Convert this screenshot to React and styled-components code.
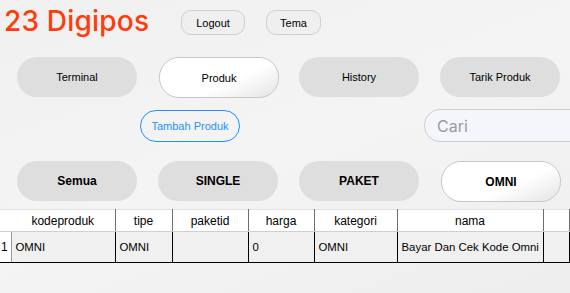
import React from "react";
import styled, { createGlobalStyle } from "styled-components";

const GlobalStyle = createGlobalStyle`
  html, body {
    margin: 0;
    padding: 0;
    background: #f0f0f0;
  }
  * {
    box-sizing: border-box;
  }
`;

const Page = styled.div`
  width: 570px;
  height: 293px;
  overflow: hidden;
  background: linear-gradient(160deg, #f0f0f0 0%, #f4f4f4 50%, #eeeeee 100%);
  font-family: "Liberation Sans", Arial, sans-serif;
`;

const TopBar = styled.div`
  display: flex;
  align-items: center;
  height: 45px;
  padding: 0 0 0 4px;
`;

const Title = styled.h1`
  margin: 0 30px 0 0;
  width: 147px;
  flex-shrink: 0;
  font-family: Inter, "Open Sans", sans-serif;
  font-weight: 500;
  font-size: 28px;
  letter-spacing: 0.2px;
  color: #ff3c0a;
  line-height: 1;
  position: relative;
  top: -2px;
`;

const SmallButton = styled.button`
  height: 25px;
  width: ${(p) => p.w}px;
  margin-right: ${(p) => p.mr || 0}px;
  border: 1px solid #cfcfcf;
  border-radius: 10px;
  background: #efefef;
  font-family: "Liberation Sans", Arial, sans-serif;
  font-size: 11px;
  color: #000;
  padding: 0;
`;

const ButtonRow = styled.div`
  display: grid;
  grid-template-columns: repeat(4, 120px);
  column-gap: 21px;
  padding-left: 17px;
  margin-top: ${(p) => p.mt}px;
`;

const PillButton = styled.button`
  height: ${(p) => (p.active ? 41 : 40)}px;
  width: 120px;
  border-radius: 20px;
  padding: 0;
  border: ${(p) => (p.active ? "1px solid #c8c8c8" : "none")};
  background: ${(p) =>
    p.active
      ? "linear-gradient(155deg, #ffffff 0%, #ffffff 60%, #e4e4e4 100%)"
      : "#dedede"};
  font-family: "Liberation Sans", Arial, sans-serif;
  font-size: ${(p) => (p.bold ? 12 : 11)}px;
  font-weight: ${(p) => (p.bold ? 700 : 400)};
  color: #000;
  margin-left: ${(p) => (p.active ? 1 : 0)}px;
`;

const ActionRow = styled.div`
  display: flex;
  align-items: center;
  margin-top: 11px;
  height: 33px;
`;

const OutlineButton = styled.button`
  flex-shrink: 0;
  margin-left: 140px;
  width: 100px;
  height: 32px;
  border: 1px solid #1e90ff;
  border-radius: 16px;
  background: transparent;
  color: #1e90ff;
  font-family: "Liberation Sans", Arial, sans-serif;
  font-size: 11px;
  white-space: nowrap;
  padding: 0;
`;

const SearchInput = styled.input`
  flex-shrink: 0;
  margin-left: 184px;
  width: 170px;
  height: 33px;
  border: 1px solid #cdcdcd;
  border-radius: 16px;
  background: #f5f6fb;
  padding: 0 0 0 12px;
  font-family: Inter, "Open Sans", sans-serif;
  font-size: 16px;
  color: #333;
  outline: none;
  &::placeholder {
    color: #9a9a9a;
  }
`;

const TableWrap = styled.div`
  margin-top: 7px;
`;

const Table = styled.table`
  border-collapse: collapse;
  table-layout: fixed;
  width: 570px;
  font-family: "Liberation Sans", Arial, sans-serif;
  font-size: 12px;
`;

const Th = styled.th`
  height: 22px;
  background: #ffffff;
  font-weight: 400;
  text-align: center;
  color: #000;
  padding: 0;
  border-top: 1px solid #e2e2e2;
  border-right: 1px solid #6e6e6e;
  border-bottom: 1px solid #cfcfcf;
  &:first-child {
    border-right: none;
  }
`;

const Td = styled.td`
  height: 31px;
  padding: 0 0 0 4px;
  background: #f0f0f0;
  color: #000;
  font-size: 11.4px;
  white-space: nowrap;
  overflow: hidden;
  border-right: 1px solid #000;
  border-bottom: 1px solid #000;
  &:nth-child(2) {
    border-left: 1px solid #9a9a9a;
    border-top: 1px solid #9a9a9a;
  }
`;

const RowHead = styled.td`
  height: 31px;
  padding: 0 0 0 1px;
  background: #ffffff;
  color: #000;
  border-bottom: 1px solid #000;
`;

const columns = [
  { key: "kodeproduk", w: 104 },
  { key: "tipe", w: 57 },
  { key: "paketid", w: 76 },
  { key: "harga", w: 66 },
  { key: "kategori", w: 83 },
  { key: "nama", w: 146 },
];

const rows = [
  {
    kodeproduk: "OMNI",
    tipe: "OMNI",
    paketid: "",
    harga: "0",
    kategori: "OMNI",
    nama: "Bayar Dan Cek Kode Omni",
  },
];

export default function App() {
  return (
    <Page>
      <GlobalStyle />
      <TopBar>
        <Title>23 Digipos</Title>
        <SmallButton w={64} mr={21}>Logout</SmallButton>
        <SmallButton w={55}>Tema</SmallButton>
      </TopBar>

      <ButtonRow mt={12}>
        <PillButton>Terminal</PillButton>
        <PillButton active>Produk</PillButton>
        <PillButton>History</PillButton>
        <PillButton>Tarik Produk</PillButton>
      </ButtonRow>

      <ActionRow>
        <OutlineButton>Tambah Produk</OutlineButton>
        <SearchInput placeholder="Cari" />
      </ActionRow>

      <ButtonRow mt={19}>
        <PillButton bold>Semua</PillButton>
        <PillButton bold>SINGLE</PillButton>
        <PillButton bold>PAKET</PillButton>
        <PillButton bold active>OMNI</PillButton>
      </ButtonRow>

      <TableWrap>
        <Table>
          <colgroup>
            <col style={{ width: 11 }} />
            {columns.map((c) => (
              <col key={c.key} style={{ width: c.w }} />
            ))}
            <col />
          </colgroup>
          <thead>
            <tr>
              <Th />
              {columns.map((c) => (
                <Th key={c.key}>{c.key}</Th>
              ))}
              <Th />
            </tr>
          </thead>
          <tbody>
            {rows.map((r, i) => (
              <tr key={i}>
                <RowHead>{i + 1}</RowHead>
                {columns.map((c) => (
                  <Td key={c.key}>{r[c.key]}</Td>
                ))}
                <Td />
              </tr>
            ))}
          </tbody>
        </Table>
      </TableWrap>
    </Page>
  );
}
